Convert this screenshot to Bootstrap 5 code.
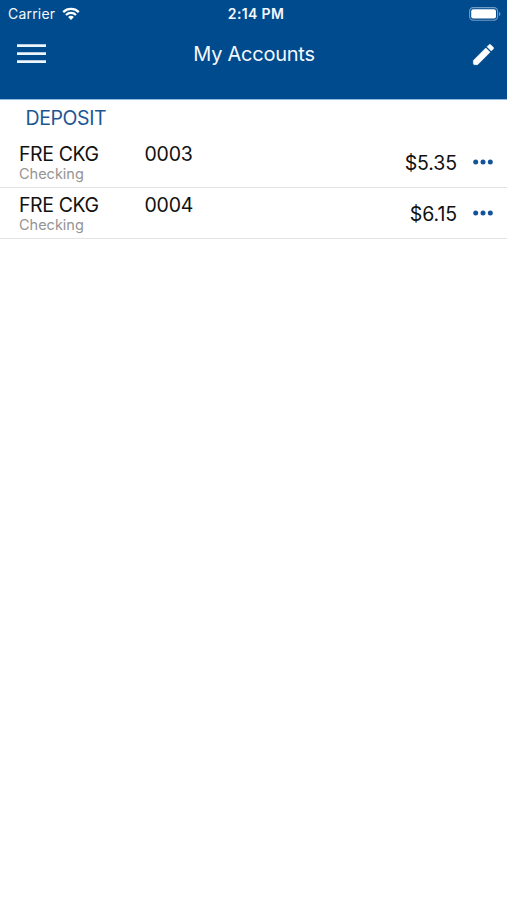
<!DOCTYPE html>
<html lang="en">
<head>
<meta charset="utf-8">
<meta name="viewport" content="width=device-width, initial-scale=1">
<title>My Accounts</title>
<link href="https://cdn.jsdelivr.net/npm/bootstrap@5.3.0/dist/css/bootstrap.min.css" rel="stylesheet">
<style>
body{font-family:Inter,"Liberation Sans",sans-serif;color:#111;background:#fff;overflow:hidden}
svg{display:block}
.app-head{background:#004b8d;height:100px;border-bottom:1px solid #8dbbe2;color:#f4f9ff}
.status{height:27px;padding:0 6px 0 8px;line-height:27px}
.status > div,.title-bar > div{flex:1 1 0}
.carrier{font-size:14px;letter-spacing:.2px}
.wifi{margin-left:7px}
.clock{font-size:14px;font-weight:600;letter-spacing:.35px;padding-left:3px}
.title-bar{height:54px;padding:0 10px 0 17px}
.title-bar h1{font-size:20px;font-weight:400;letter-spacing:-.25px;line-height:54px;padding-right:6px}
.section-title{height:37px;line-height:37px;padding-left:25.5px;font-size:19.5px;color:#1c5793;letter-spacing:-.4px}
.account{height:51px;padding:5px 14px 0 19px;background:#fff;color:inherit}
.list-group > .account,.list-group > .account:last-child{border-width:0 0 1px;border-color:#e3e3e3}
.acct-name{width:125.5px;letter-spacing:-.4px}
.acct-number{letter-spacing:-.2px}
.acct-line{font-size:19.5px;line-height:25px;height:24px}
.acct-kind{font-size:14.5px;line-height:15px;color:#949494}
.balance{height:40px}
.amount{font-size:19.5px;line-height:40px;letter-spacing:-.1px;padding-top:1px}
.more{color:#14529a;margin-left:16px}
</style>
</head>
<body>
<header class="app-head">
  <div class="status d-flex align-items-center">
    <div class="carrier d-flex align-items-center"><span class="carrier-name">Carrier</span>
      <svg class="wifi" width="18" height="14" viewBox="0 0 18 14" fill="none" stroke="#fff" stroke-width="2.3"><path d="M1.2 5.1a11.2 11.2 0 0 1 15.6 0M4 8a7.1 7.1 0 0 1 10 0"/><path d="M9 13 6.1 10.1a4.2 4.2 0 0 1 5.8 0z" fill="#fff" stroke="none"/></svg>
    </div>
    <span class="clock">2:14 PM</span>
    <div class="d-flex justify-content-end">
      <svg width="32" height="14" viewBox="0 0 32 14"><rect x=".6" y=".6" width="28" height="12.6" rx="3.6" fill="none" stroke="#719cc3" stroke-width="1.1"/><rect x="2.2" y="2.2" width="24.8" height="9.4" rx="2" fill="#fff"/><path d="M30 5v4q1.4-.6 1.4-2T30 5" fill="#719cc3"/></svg>
    </div>
  </div>
  <div class="title-bar d-flex align-items-center">
    <div><svg width="29" height="20" viewBox="0 0 29 20" stroke="#edf6ff" stroke-width="2.8"><path d="M0 1.7h29M0 9.7h29M0 17.7h29"/></svg></div>
    <h1 class="m-0">My Accounts</h1>
    <div class="d-flex justify-content-end"><svg width="27" height="27" viewBox="0 0 24 24" fill="#fff" stroke="#fff" stroke-width=".5" stroke-linejoin="round"><path d="M3 17.25V20q0 1 1 1h2.75L17.81 9.94l-3.75-3.75zM20.71 7.04a1 1 0 0 0 0-1.41l-2.34-2.34a1 1 0 0 0-1.41 0l-1.83 1.83 3.75 3.75z"/></svg></div>
  </div>
</header>
<main>
  <h2 class="section-title m-0 fw-normal">DEPOSIT</h2>
  <div class="list-group list-group-flush rounded-0">
    <div class="account list-group-item d-flex">
      <div class="flex-grow-1">
        <div class="acct-line d-flex"><span class="acct-name">FRE CKG</span><span class="acct-number">0003</span></div>
        <div class="acct-kind">Checking</div>
      </div>
      <div class="balance d-flex align-items-center"><span class="amount">$5.35</span>
        <svg class="more" width="20" height="6" viewBox="0 0 20 6" fill="currentColor"><circle cx="2.7" cy="3" r="2.5"/><circle cx="10" cy="3" r="2.5"/><circle cx="17.3" cy="3" r="2.5"/></svg></div>
    </div>
    <div class="account list-group-item d-flex">
      <div class="flex-grow-1">
        <div class="acct-line d-flex"><span class="acct-name">FRE CKG</span><span class="acct-number">0004</span></div>
        <div class="acct-kind">Checking</div>
      </div>
      <div class="balance d-flex align-items-center"><span class="amount">$6.15</span>
        <svg class="more" width="20" height="6" viewBox="0 0 20 6" fill="currentColor"><circle cx="2.7" cy="3" r="2.5"/><circle cx="10" cy="3" r="2.5"/><circle cx="17.3" cy="3" r="2.5"/></svg></div>
    </div>
  </div>
</main>
<script src="https://cdn.jsdelivr.net/npm/bootstrap@5.3.0/dist/js/bootstrap.bundle.min.js"></script>
</body>
</html>
